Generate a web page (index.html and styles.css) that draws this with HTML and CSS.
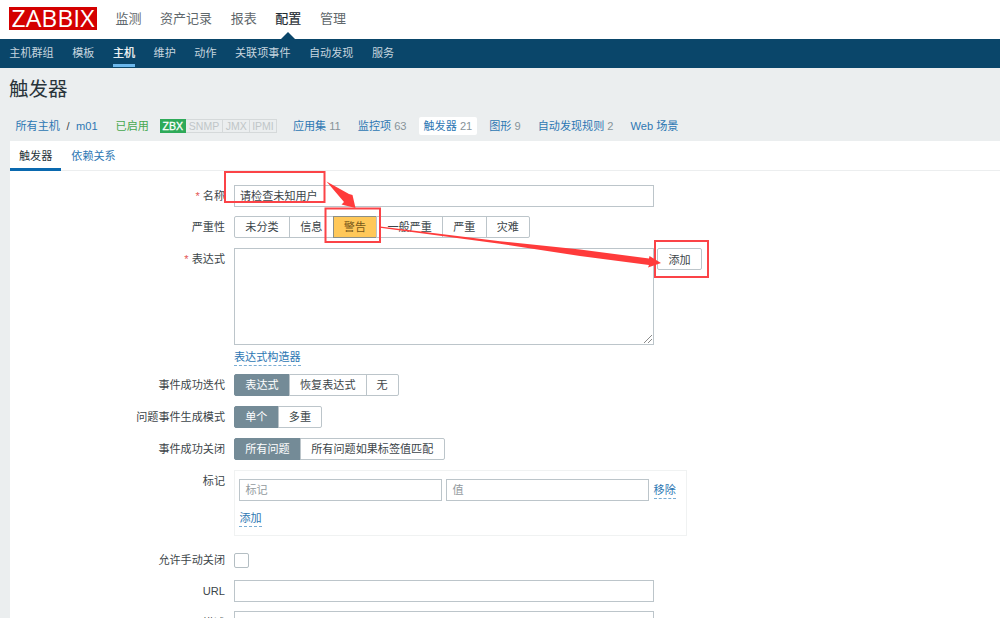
FILE: index.html
```html
<!DOCTYPE html>
<html lang="zh-CN">
<head>
<meta charset="utf-8">
<title>触发器</title>
<link rel="stylesheet" href="styles.css">
</head>
<body>
<header class="top">
  <svg class="logo" width="88" height="23" viewBox="0 0 88 23"><rect width="88" height="23" fill="#d40000"/><text x="2.5" y="19.7" textLength="83" lengthAdjust="spacingAndGlyphs">ZABBIX</text></svg>
  <nav class="main-nav"><a>监测</a><a>资产记录</a><a>报表</a><a class="on">配置</a><a>管理</a></nav>
</header>
<nav class="sub-nav"><a>主机群组</a><a>模板</a><a class="on">主机</a><a>维护</a><a>动作</a><a>关联项事件</a><a>自动发现</a><a>服务</a></nav>
<h1>触发器</h1>
<div class="crumbs">
  <a class="hosts">所有主机</a><span class="slash">/</span><a class="host">m01</a><span class="enabled">已启用</span>
  <span class="status"><b>ZBX</b><i class="snmp">SNMP</i><i class="jmx">JMX</i><i class="ipmi">IPMI</i></span>
  <span class="objects"><span><a>应用集</a> 11</span><span><a>监控项</a> 63</span><span class="on"><a>触发器</a> 21</span><span><a>图形</a> 9</span><span><a>自动发现规则</a> 2</span><span><a>Web 场景</a></span></span>
</div>
<main class="panel">
  <div class="tabs"><a class="on">触发器</a><a>依赖关系</a></div>
  <form class="form">
    <div class="row name"><label><em>*</em> 名称</label><div class="input wide">请检查未知用户</div></div>
    <div class="row"><label>严重性</label><div class="seg"><span class="w3">未分类</span><span class="w2">信息</span><span class="w2 warn">警告</span><span class="w4">一般严重</span><span class="w2">严重</span><span class="w2">灾难</span></div></div>
    <div class="row expression"><label><em>*</em> 表达式</label>
      <div class="area"><svg width="10" height="10" viewBox="0 0 10 10"><path d="M1 9 9 1M5 9 9 5" stroke="#8a8a8a" fill="none"/></svg></div>
      <button type="button">添加</button></div>
    <div class="row builder"><label></label><a class="link">表达式构造器</a></div>
    <div class="row"><label>事件成功迭代</label><div class="seg"><span class="w3 sel">表达式</span><span class="w5">恢复表达式</span><span class="w1">无</span></div></div>
    <div class="row"><label>问题事件生成模式</label><div class="seg"><span class="w2 sel">单个</span><span class="w2">多重</span></div></div>
    <div class="row"><label>事件成功关闭</label><div class="seg"><span class="w4 sel">所有问题</span><span class="w11">所有问题如果标签值匹配</span></div></div>
    <div class="row tags"><label>标记</label><div class="tagbox"><div class="tagline"><div class="input">标记</div><div class="input">值</div><a class="link">移除</a></div><a class="link">添加</a></div></div>
    <div class="row manual"><label>允许手动关闭</label><span class="check"></span></div>
    <div class="row url"><label>URL</label><div class="input wide"></div></div>
    <div class="row desc"><label>描述</label><div class="input wide"></div></div>
  </form>
</main>
<svg class="marks" width="1000" height="618" viewBox="0 0 1000 618">
  <g fill="none" stroke="#fb4347" stroke-width="2"><rect x="225" y="172" width="99.5" height="30"/><rect x="325.5" y="208.5" width="54.5" height="33.5"/><rect x="655" y="241" width="53" height="36"/></g>
  <path fill="#ff3b3b" d="M326.5 181.5 349 194 352.500 195 355.500 208 341.500 204.500 344 202Z"/>
  <path fill="#ff3b3b" d="M380 226.400 500 241.200 580 249.500 649 258.500 649.500 256 661 263 648 267.500 649 265 580 256 500 243.800 380 227.800Z"/>
</svg>
</body>
</html>
```
FILE: styles.css
```css
* { box-sizing: border-box; }
body {
  margin: 0;
  height: 618px;
  overflow: hidden;
  position: relative;
  background: #ebeeef;
  color: #3c4549;
  font: 11.1px/16px "Liberation Sans", "Noto Sans CJK SC", sans-serif;
  white-space: nowrap;
}
.top { height: 39px; background: #fff; display: flex; padding-left: 9px; }
.logo { margin-top: 7px; flex: none; overflow: visible; }
.logo text { font: 23.5px "Open Sans", sans-serif; fill: #fff; }
.main-nav { display: flex; gap: 18.6px; margin-left: 18.5px; height: 39px; font-size: 13px; line-height: 37px; color: #5f686c; }
.main-nav .on { color: #1f2c33; position: relative; -webkit-text-stroke: .2px; }
.main-nav .on::after {
  content: "";
  position: absolute;
  left: 6px;
  bottom: 0;
  border: 7px solid transparent;
  border-top: 0;
  border-bottom: 7px solid #0a466a;
}
.sub-nav { height: 28.5px; background: #0a466a; display: flex; gap: 18.5px; padding-left: 9.3px; line-height: 28px; color: #c6d5df; }
.sub-nav a { height: 28px; }
.sub-nav .on { color: #fff; border-bottom: 3px solid #6cb8ec; height: 27.5px; -webkit-text-stroke: .2px; }
h1 { margin: 0; height: 49.5px; padding: 7px 0 0 9px; font-size: 19.5px; font-weight: 400; line-height: 28px; color: #29343a; }
.crumbs { height: 24px; display: flex; align-items: flex-start; padding-left: 15.5px; line-height: 18px; }
.crumbs a { color: #2d77b3; }
.slash { margin: 0 6.5px; }
.enabled { color: #45a84e; margin-left: 18px; }
.status { display: flex; width: 117px; height: 14px; margin: 2px 0 0 11px; line-height: 14px; font-size: 10.5px; border: 1px solid #d5d9da; border-left: 0; text-align: center; }
.status b { font-weight: 400; background: #2eaa59; color: #fff; width: 26px; margin: -1px 0; line-height: 15px; -webkit-text-stroke: .3px; }
.status i { font-style: normal; color: #c0c6c8; line-height: 13px; border-left: 1px solid #d5d9da; }
.status b + i { border-left: 0; }
.snmp { width: 37px; }
.jmx { width: 27px; }
.ipmi { width: 27px; }
.objects { display: flex; gap: 7px; margin-left: 11px; color: #879399; }
.objects > span { padding: 0 5px; height: 18px; border-radius: 2px; }
.objects .on { background: #fff; }
.panel { margin-left: 10px; height: 480px; background: #fff; }
.tabs { display: flex; height: 30px; border-bottom: 1px solid #eceeef; line-height: 31px; color: #2d77b3; }
.tabs a { height: 30px; padding: 0 9px; }
.tabs a + a { padding-left: 10px; }
.tabs .on { color: #28343a; border-bottom: 3px solid #0a69af; }
.form { padding-top: 14px; display: flex; flex-direction: column; }
.row { display: flex; height: 22px; margin-bottom: 10px; align-items: flex-start; line-height: 22px; flex: none; }
.row label { width: 215px; margin-right: 9px; text-align: right; flex: none; }
.row em { font-style: normal; color: #e45959; }
.input { height: 22px; border: 1px solid #bcc5ca; background: #fff; padding-left: 5px; line-height: 21px; }
.wide { width: 420px; }
.row.name { margin-bottom: 9px; height: 22px; }
.seg { display: flex; height: 22px; line-height: 20px; }
.seg span { border: 1px solid #bcc5ca; margin-right: -1px; text-align: center; }
.seg span:first-child { border-radius: 2px 0 0 2px; }
.seg span:last-child { border-radius: 0 2px 2px 0; }
.seg .sel { background: #748b97; border-color: #748b97; color: #fff; }
.seg .warn { background: #ffc859; border-color: #8b8f87; color: #765718; }
.w1 { width: 33.2px; }
.w2 { width: 44.6px; }
.w3 { width: 56px; }
.w4 { width: 66.8px; }
.w5 { width: 77.5px; }
.w11 { width: 145px; }
.row.expression { height: 97.5px; margin-bottom: 4.5px; }
.area { width: 420px; height: 97px; border: 1px solid #bcc5ca; display: flex; align-items: flex-end; justify-content: flex-end; }
button { width: 45px; height: 22px; margin-left: 3px; padding: 0; font: inherit; color: inherit; background: #fff; border: 1px solid #bcc5ca; border-radius: 2px; }
.link { color: #2d77b3; line-height: 15px; border-bottom: 1px dashed #79add4; }
.row.builder { height: 15px; margin-bottom: 9px; }
.row.tags { height: 66px; margin-bottom: 13px; }
.tagbox { width: 453px; height: 66px; padding: 8px 4.4px; border: 1px solid #f0f2f2; display: flex; flex-direction: column; align-items: flex-start; gap: 10px; }
.tagline { display: flex; gap: 4.6px; align-items: center; }
.tagline .input { width: 202.5px; color: #929a9e; }
.tagline .link { margin-top: 2px; }
.row.manual { height: 22px; margin-bottom: 9px; }
.check { width: 15px; height: 15px; margin-top: 3.5px; border: 1px solid #b4bec3; border-radius: 2px; }
.row.url { margin-bottom: 9px; }
.row.desc { line-height: 24px; }
.marks { position: absolute; left: 0; top: 0; pointer-events: none; }
```
